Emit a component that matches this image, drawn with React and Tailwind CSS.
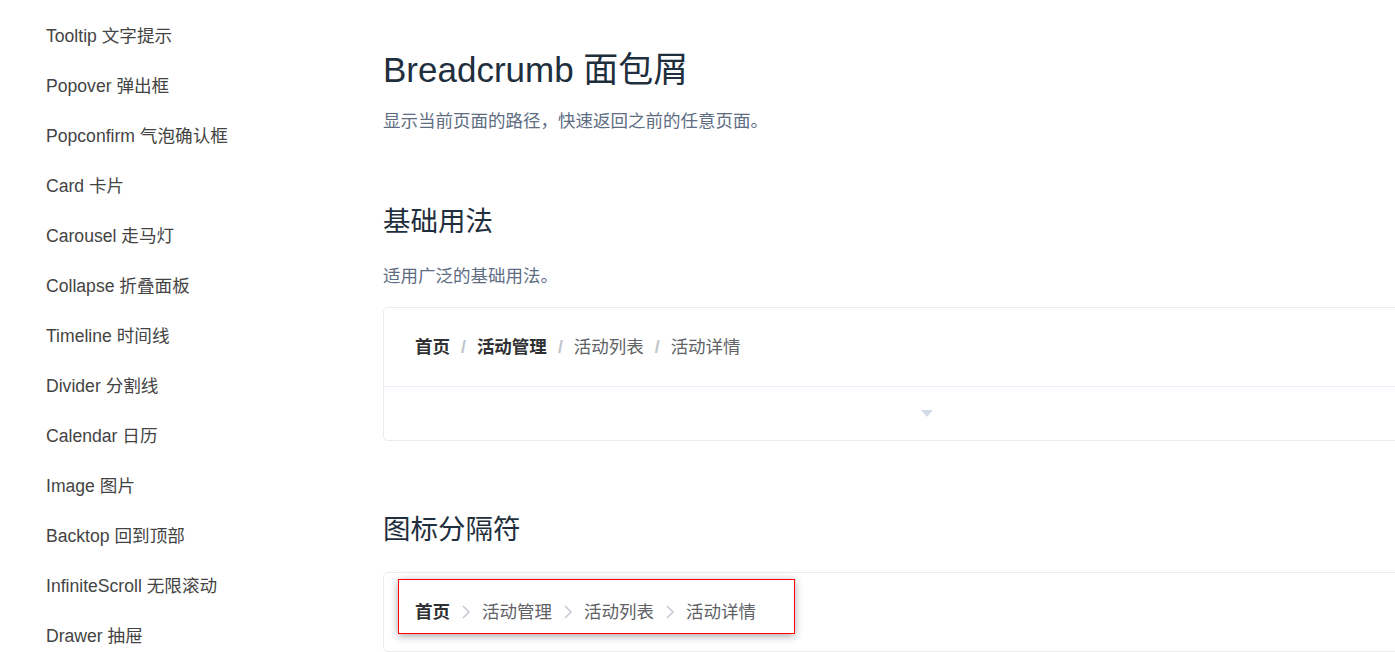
import React from "react";

const FONT = { fontFamily: '"Liberation Sans", Arial, "Noto Sans CJK SC", sans-serif' };

const navItems = [
  "Tooltip 文字提示",
  "Popover 弹出框",
  "Popconfirm 气泡确认框",
  "Card 卡片",
  "Carousel 走马灯",
  "Collapse 折叠面板",
  "Timeline 时间线",
  "Divider 分割线",
  "Calendar 日历",
  "Image 图片",
  "Backtop 回到顶部",
  "InfiniteScroll 无限滚动",
  "Drawer 抽屉",
];

function Slash() {
  return <span className="mx-[11px] font-bold text-[#c0c4cc]">/</span>;
}

function Chevron() {
  return (
    <span className="mx-[12px] inline-flex items-center">
      <svg width="8" height="14" viewBox="0 0 8 14" fill="none">
        <path d="M1 1 L7 7 L1 13" stroke="#c0c4cc" strokeWidth="1.4" strokeLinejoin="miter" />
      </svg>
    </span>
  );
}

export default function App() {
  return (
    <div className="h-[652px] w-full overflow-hidden bg-white" style={FONT}>
      <div className="flex">
        <aside className="w-[383px] shrink-0 pl-[46px] pt-[11px]">
          {navItems.map((t) => (
            <div key={t} className="text-[17.6px] leading-[50px] text-[#444]">
              {t}
            </div>
          ))}
        </aside>
        <main className="w-[1088px] shrink-0">
          <h2 className="mt-[48px] text-[35px] leading-[44px] text-[#1f2f3d]">Breadcrumb 面包屑</h2>
          <p className="mt-[17px] text-[17.5px] leading-[24px] text-[#5e6d82]">
            显示当前页面的路径，快速返回之前的任意页面。
          </p>
          <h3 className="mt-[71px] text-[27.5px] leading-[36px] text-[#1f2f3d]">基础用法</h3>
          <p className="mt-[24px] text-[17.5px] leading-[24px] text-[#5e6d82]">适用广泛的基础用法。</p>
          <div className="mt-[19px] rounded-[5px] border border-[#ebebeb]">
            <div className="flex h-[78px] items-center pl-[31px] text-[17.5px] leading-[20px]">
              <span className="font-bold text-[#303133]">首页</span>
              <Slash />
              <span className="font-bold text-[#303133]">活动管理</span>
              <Slash />
              <span className="text-[#606266]">活动列表</span>
              <Slash />
              <span className="text-[#606266]">活动详情</span>
            </div>
            <div className="flex h-[54px] items-center justify-center border-t border-[#eaeefb]">
              <div className="h-0 w-0 border-x-[6px] border-t-[7px] border-x-transparent border-t-[#d3dce6]" />
            </div>
          </div>
          <h3 className="mt-[71px] text-[27.5px] leading-[36px] text-[#1f2f3d]">图标分隔符</h3>
          <div className="relative mt-[24px] rounded-[5px] border border-[#ebebeb]">
            <div className="flex h-[78px] items-center pl-[31px] text-[17.5px] leading-[20px]">
              <span className="font-bold text-[#303133]">首页</span>
              <Chevron />
              <span className="text-[#606266]">活动管理</span>
              <Chevron />
              <span className="text-[#606266]">活动列表</span>
              <Chevron />
              <span className="text-[#606266]">活动详情</span>
            </div>
            <div className="pointer-events-none absolute left-[14px] top-[6px] h-[55px] w-[397px] border border-[#ff0000] shadow-[0_2px_8px_rgba(0,0,0,0.35)]" />
          </div>
        </main>
      </div>
    </div>
  );
}
